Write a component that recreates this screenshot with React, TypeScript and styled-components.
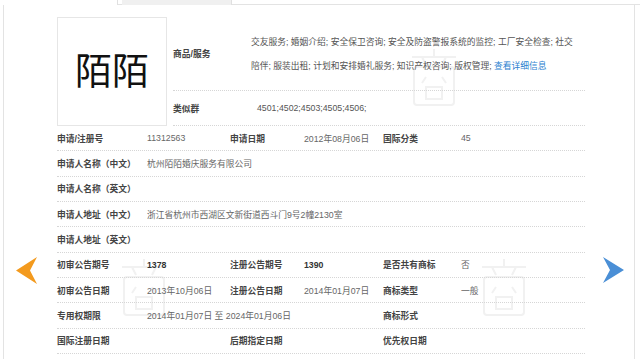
import styled, { createGlobalStyle } from 'styled-components'

const GlobalStyle = createGlobalStyle`
  html, body {
    margin: 0;
    padding: 0;
    background: #fff;
  }
  body {
    font-family: 'Liberation Sans', 'Noto Sans CJK SC', sans-serif;
    font-size: 8.75px;
    color: #555;
  }
`

interface Cell {
  text?: string
  label?: boolean
  strong?: boolean
}

const rows: Cell[][] = [
  [
    { text: '申请/注册号', label: true },
    { text: '11312563' },
    { text: '申请日期', label: true },
    { text: '2012年08月06日' },
    { text: '国际分类', label: true },
    { text: '45' },
  ],
  [{ text: '申请人名称（中文）', label: true }, { text: '杭州陌陌婚庆服务有限公司' }],
  [{ text: '申请人名称（英文）', label: true }],
  [
    { text: '申请人地址（中文）', label: true },
    { text: '浙江省杭州市西湖区文新街道西斗门9号2幢2130室' },
  ],
  [{ text: '申请人地址（英文）', label: true }],
  [
    { text: '初审公告期号', label: true },
    { text: '1378', strong: true },
    { text: '注册公告期号', label: true },
    { text: '1390', strong: true },
    { text: '是否共有商标', label: true },
    { text: '否' },
  ],
  [
    { text: '初审公告日期', label: true },
    { text: '2013年10月06日' },
    { text: '注册公告日期', label: true },
    { text: '2014年01月07日' },
    { text: '商标类型', label: true },
    { text: '一般' },
  ],
  [
    { text: '专用权期限', label: true },
    { text: '2014年01月07日 至 2024年01月06日' },
    {},
    {},
    { text: '商标形式', label: true },
    {},
  ],
  [
    { text: '国际注册日期', label: true },
    {},
    { text: '后期指定日期', label: true },
    {},
    { text: '优先权日期', label: true },
    {},
  ],
]

// faint stamp shapes behind the table, like the site's watermark
const Stamp = ({ x, y }: { x: number; y: number }) => (
  <StampSvg style={{ left: x, top: y }} width="60" height="64" viewBox="0 0 60 64">
    <g fill="none" stroke="#f1f1f1" strokeWidth="2">
      <path d="M30 4v8M8 12h44M18 12l4 8M42 12l-4 8" />
      <rect x="10" y="22" width="40" height="38" rx="3" />
      <path d="M22 32l-4 6M38 32l4 6" />
      <rect x="22" y="42" width="16" height="12" />
    </g>
  </StampSvg>
)

const App = () => {
  return (
    <>
      <GlobalStyle />
      <Page>
        <TopStrip>
          <Tab />
          <Tab $active />
        </TopStrip>
        <Panel>
          <Stamp x={400} y={40} />
          <Stamp x={470} y={250} />
          <Stamp x={110} y={250} />

          <Header>
            <LogoBox>陌陌</LogoBox>
            <Info>
              <InfoRow $h={74}>
                <InfoLabel>商品/服务</InfoLabel>
                <Services>
                  <span>交友服务; 婚姻介绍; 安全保卫咨询; 安全及防盗警报系统的监控; 工厂安全检查; 社交</span>
                  <span>
                    陪伴; 服装出租; 计划和安排婚礼服务; 知识产权咨询; 版权管理; <Link>查看详细信息</Link>
                  </span>
                </Services>
              </InfoRow>
              <InfoRow $h={35}>
                <InfoLabel>类似群</InfoLabel>
                <Groups>4501;4502;4503;4505;4506;</Groups>
              </InfoRow>
            </Info>
          </Header>

          <Table>
            {rows.map((row, i) => (
              <Row key={i}>
                {row.map((c, j) =>
                  c.label ? (
                    <Label key={j}>{c.text}</Label>
                  ) : (
                    <Value key={j} $strong={c.strong} $span={row.length === 2 ? 5 : 1}>
                      {c.text}
                    </Value>
                  )
                )}
              </Row>
            ))}
          </Table>

          <Arrow $side="left" viewBox="0 0 22 27" width="22" height="27">
            <polygon points="21,0 0,13.5 21,27 14,13.5" fill="#f39a1e" />
          </Arrow>
          <Arrow $side="right" viewBox="0 0 22 27" width="22" height="27">
            <polygon points="0,0 21,13 0,26 7,13" fill="#4a8fd6" />
          </Arrow>
        </Panel>
      </Page>
    </>
  )
}

export default App

const Page = styled.div`
  width: 640px;
  height: 359px;
  overflow: hidden;
  position: relative;
`

const TopStrip = styled.div`
  height: 5px;
  display: flex;
  gap: 4px;
  border-bottom: 1px solid #e3e3e3;
  box-sizing: border-box;
`

const Tab = styled.div<{ $active?: boolean }>`
  width: ${(p) => (p.$active ? '110px' : '118px')};
  height: 5px;
  background: ${(p) => (p.$active ? '#f0f0f0' : '#fff')};
  border-right: 1px solid #e0e0e0;
  box-sizing: border-box;
`

const Panel = styled.div`
  position: relative;
  margin-left: 3px;
  width: 632px;
  height: 354px;
  border-left: 1px solid #e3e3e3;
  border-right: 1px solid #e3e3e3;
  box-sizing: border-box;
  padding-left: 53px;
`

const StampSvg = styled.svg`
  position: absolute;
  pointer-events: none;
`

const Header = styled.div`
  position: relative;
  display: flex;
  gap: 6px;
  padding-top: 12px;
`

const LogoBox = styled.div`
  width: 110px;
  height: 109px;
  border: 1px solid #e6e6e6;
  box-sizing: border-box;
  display: flex;
  align-items: center;
  justify-content: center;
  padding-bottom: 6px;
  font-family: 'Noto Sans CJK SC', sans-serif;
  font-size: 37px;
  color: #111;
  background: #fff;
`

const Info = styled.div`
  width: 412px;
  display: flex;
  flex-direction: column;
`

const InfoRow = styled.div<{ $h: number }>`
  height: ${(p) => p.$h}px;
  display: flex;
  align-items: center;
  border-bottom: 1px dotted #d6d6d6;
  box-sizing: border-box;
`

const InfoLabel = styled.div`
  width: 78px;
  flex-shrink: 0;
  font-weight: bold;
  color: #444;
`

const Services = styled.div`
  display: flex;
  flex-direction: column;
  line-height: 24px;
  color: #555;
  white-space: nowrap;
`

const Link = styled.span`
  color: #2b7fcf;
`

const Groups = styled.div`
  padding-left: 6px;
  color: #555;
`

const Table = styled.div`
  position: relative;
  width: 528px;
  display: flex;
  flex-direction: column;
`

const Row = styled.div`
  height: 25.33px;
  display: grid;
  grid-template-columns: 90px 83px 74px 79px 78px 1fr;
  align-items: center;
  border-bottom: 1px dotted #d6d6d6;
  box-sizing: border-box;
`

const Label = styled.div`
  font-weight: bold;
  color: #444;
  white-space: nowrap;
`

const Value = styled.div<{ $strong?: boolean; $span: number }>`
  grid-column: span ${(p) => p.$span};
  color: ${(p) => (p.$strong ? '#333' : '#666')};
  font-weight: ${(p) => (p.$strong ? 'bold' : 'normal')};
  white-space: nowrap;
`

const Arrow = styled.svg<{ $side: 'left' | 'right' }>`
  position: absolute;
  top: 252px;
  ${(p) => (p.$side === 'left' ? 'left: 12px;' : 'left: 599px;')}
`
